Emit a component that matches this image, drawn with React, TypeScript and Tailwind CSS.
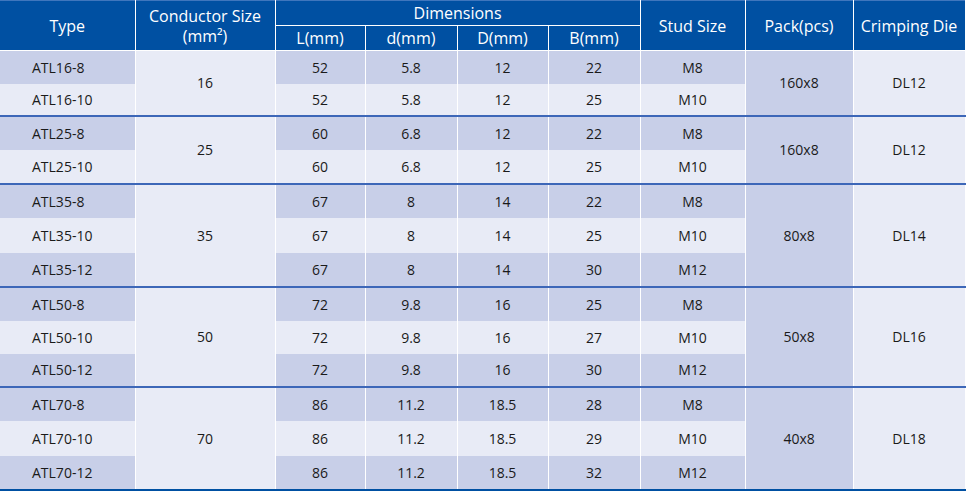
type Row = {
  type: string;
  L: string;
  d: string;
  D: string;
  B: string;
  stud: string;
};

type Group = {
  size: string;
  pack: string;
  die: string;
  heights: string[];
  rows: Row[];
};

const groups: Group[] = [
  {
    size: "16",
    pack: "160x8",
    die: "DL12",
    heights: ["h-[33px]", "h-[32px]"],
    rows: [
      { type: "ATL16-8", L: "52", d: "5.8", D: "12", B: "22", stud: "M8" },
      { type: "ATL16-10", L: "52", d: "5.8", D: "12", B: "25", stud: "M10" },
    ],
  },
  {
    size: "25",
    pack: "160x8",
    die: "DL12",
    heights: ["h-[34px]", "h-[34px]"],
    rows: [
      { type: "ATL25-8", L: "60", d: "6.8", D: "12", B: "22", stud: "M8" },
      { type: "ATL25-10", L: "60", d: "6.8", D: "12", B: "25", stud: "M10" },
    ],
  },
  {
    size: "35",
    pack: "80x8",
    die: "DL14",
    heights: ["h-[34px]", "h-[35px]", "h-[34px]"],
    rows: [
      { type: "ATL35-8", L: "67", d: "8", D: "14", B: "22", stud: "M8" },
      { type: "ATL35-10", L: "67", d: "8", D: "14", B: "25", stud: "M10" },
      { type: "ATL35-12", L: "67", d: "8", D: "14", B: "30", stud: "M12" },
    ],
  },
  {
    size: "50",
    pack: "50x8",
    die: "DL16",
    heights: ["h-[34px]", "h-[33px]", "h-[33px]"],
    rows: [
      { type: "ATL50-8", L: "72", d: "9.8", D: "16", B: "25", stud: "M8" },
      { type: "ATL50-10", L: "72", d: "9.8", D: "16", B: "27", stud: "M10" },
      { type: "ATL50-12", L: "72", d: "9.8", D: "16", B: "30", stud: "M12" },
    ],
  },
  {
    size: "70",
    pack: "40x8",
    die: "DL18",
    heights: ["h-[34px]", "h-[35px]", "h-[34px]"],
    rows: [
      { type: "ATL70-8", L: "86", d: "11.2", D: "18.5", B: "28", stud: "M8" },
      { type: "ATL70-10", L: "86", d: "11.2", D: "18.5", B: "29", stud: "M10" },
      { type: "ATL70-12", L: "86", d: "11.2", D: "18.5", B: "32", stud: "M12" },
    ],
  },
];

const th = "bg-[#0050a2] text-white font-normal border border-white text-center";

export default function App() {
  return (
    <div
      className="w-[966px] h-[492px] bg-white overflow-hidden"
      style={{ fontFamily: '"Open Sans", "Noto Sans", sans-serif' }}
    >
      <table className="w-[965px] table-fixed border-collapse text-[14px] text-[#1a1a1a]">
        <colgroup>
          <col className="w-[135px]" />
          <col className="w-[140px]" />
          <col className="w-[90px]" />
          <col className="w-[92px]" />
          <col className="w-[91px]" />
          <col className="w-[92px]" />
          <col className="w-[105px]" />
          <col className="w-[108px]" />
          <col className="w-[112px]" />
        </colgroup>
        <thead className="text-[16px] leading-[20px]">
          <tr className="h-[25px]">
            <th rowSpan={2} className={`${th} border-l-0 border-t-[#3f76bd]`}>
              Type
            </th>
            <th rowSpan={2} className={`${th} border-t-[#3f76bd]`}>
              Conductor Size
              <br />
              (mm²)
            </th>
            <th colSpan={4} className={`${th} border-t-[#3f76bd]`}>
              Dimensions
            </th>
            <th rowSpan={2} className={`${th} border-t-[#3f76bd]`}>
              Stud Size
            </th>
            <th rowSpan={2} className={`${th} border-t-[#3f76bd]`}>
              Pack(pcs)
            </th>
            <th rowSpan={2} className={`${th} border-t-[#3f76bd]`}>
              Crimping Die
            </th>
          </tr>
          <tr className="h-[25px]">
            <th className={th}>L(mm)</th>
            <th className={th}>d(mm)</th>
            <th className={th}>D(mm)</th>
            <th className={th}>B(mm)</th>
          </tr>
        </thead>
        <tbody>
          {groups.map((g, gi) =>
            g.rows.map((r, ri) => {
              const dark = ri % 2 === 0;
              const rowBg = dark ? "bg-[#c8cfe8]" : "bg-[#e8ebf6]";
              const sep = ri === 0 && gi > 0 ? "border-t-2 border-t-[#3d67b8]" : "";
              const last = gi === groups.length - 1 && ri === g.rows.length - 1;
              const bottom = last ? "border-b-2 border-b-[#0050a2]" : "";
              const cell = `${rowBg} ${sep} ${bottom} border-x border-x-white text-center`;
              const merged = (bg: string) =>
                `${bg} ${gi > 0 ? "border-t-2 border-t-[#3d67b8]" : ""} ${
                  gi === groups.length - 1 ? "border-b-2 border-b-[#0050a2]" : ""
                } border-x border-x-white text-center`;
              return (
                <tr key={r.type} className={g.heights[ri]}>
                  <td className={`${cell} border-l-0 text-left pl-[32px]`}>{r.type}</td>
                  {ri === 0 && (
                    <td rowSpan={g.rows.length} className={merged("bg-[#e8ebf6]")}>
                      {g.size}
                    </td>
                  )}
                  <td className={cell}>{r.L}</td>
                  <td className={cell}>{r.d}</td>
                  <td className={cell}>{r.D}</td>
                  <td className={cell}>{r.B}</td>
                  <td className={cell}>{r.stud}</td>
                  {ri === 0 && (
                    <td rowSpan={g.rows.length} className={merged("bg-[#c8cfe8]")}>
                      {g.pack}
                    </td>
                  )}
                  {ri === 0 && (
                    <td rowSpan={g.rows.length} className={merged("bg-[#e8ebf6]")}>
                      {g.die}
                    </td>
                  )}
                </tr>
              );
            })
          )}
        </tbody>
      </table>
    </div>
  );
}
